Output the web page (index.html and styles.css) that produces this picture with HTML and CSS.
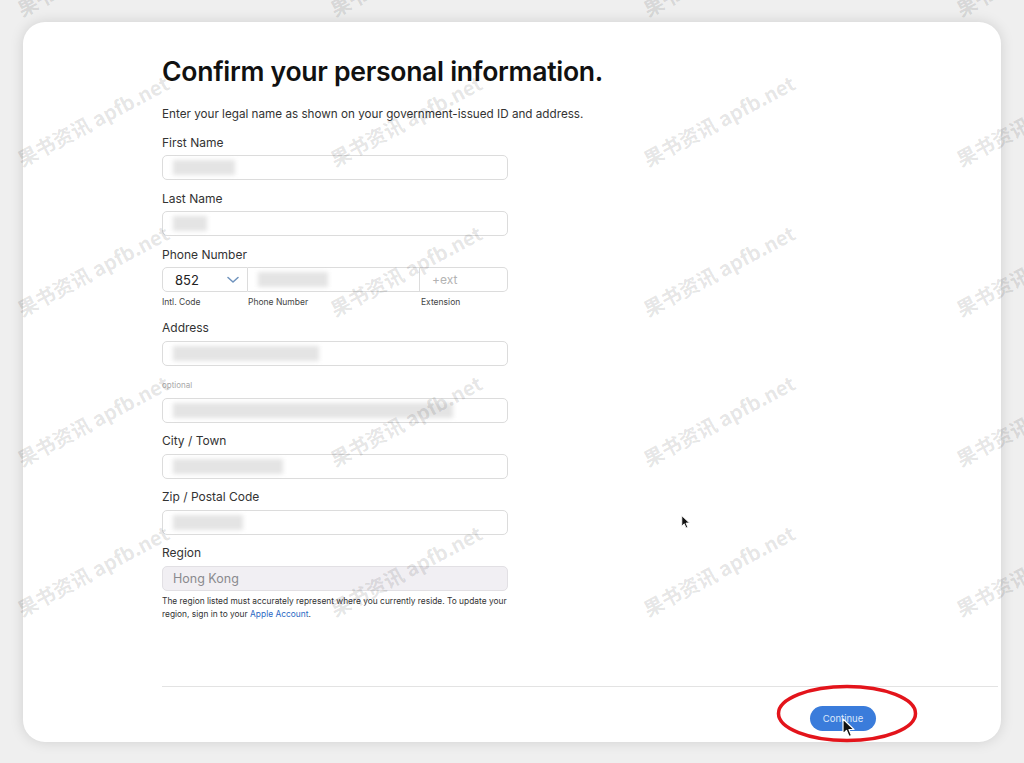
FILE: index.html
```html
<!DOCTYPE html>
<html lang="en">
<head>
<meta charset="utf-8">
<title>Confirm your personal information</title>
<link rel="stylesheet" href="styles.css">
</head>
<body>
<div class="page">
  <main class="card">
    <section class="content">
      <h1 class="title">Confirm your personal information.</h1>
      <p class="intro">Enter your legal name as shown on your government-issued ID and address.</p>

      <div class="field">
        <label class="label">First Name</label>
        <div class="input"><span class="redact r-first"></span></div>
      </div>

      <div class="field">
        <label class="label">Last Name</label>
        <div class="input"><span class="redact r-last"></span></div>
      </div>

      <div class="field">
        <label class="label">Phone Number</label>
        <div class="phone-row">
          <div class="input code"><span class="code-val">852</span>
            <svg class="chev" width="12" height="8" viewBox="0 0 12 8"><path d="M1 1.5 L6 6 L11 1.5" fill="none" stroke="#6f93bd" stroke-width="1.5" stroke-linecap="round" stroke-linejoin="round"/></svg>
          </div>
          <div class="input num"><span class="redact r-phone"></span></div>
          <div class="input ext"><span class="ph">+ext</span></div>
        </div>
        <div class="phone-sub">
          <span>Intl. Code</span><span>Phone Number</span><span>Extension</span>
        </div>
      </div>

      <div class="field">
        <label class="label">Address</label>
        <div class="input"><span class="redact r-addr"></span></div>
        <span class="optional">optional</span>
        <div class="input"><span class="redact r-addr2"></span></div>
      </div>

      <div class="field">
        <label class="label">City / Town</label>
        <div class="input"><span class="redact r-city"></span></div>
      </div>

      <div class="field">
        <label class="label">Zip / Postal Code</label>
        <div class="input"><span class="redact r-zip"></span></div>
      </div>

      <div class="field">
        <label class="label">Region</label>
        <div class="input disabled"><span class="region-val">Hong Kong</span></div>
        <p class="note">The region listed must accurately represent where you currently reside. To update your region, sign in to your <a class="link">Apple Account</a>.</p>
      </div>
    </section>

    <footer class="footer">
      <div class="actions">
        <button class="continue">Continue</button>
        <svg class="ring" width="144" height="61" viewBox="0 0 144 61"><ellipse cx="72" cy="30.5" rx="68.5" ry="27" fill="none" stroke="#e3141b" stroke-width="3.5"/></svg>
        <svg class="cursor cursor-btn" width="14" height="20" viewBox="0 0 14 20"><path d="M1 1 L1 16 L4.5 12.5 L7 18.5 L9.5 17.5 L7 11.5 L12 11.5 Z" fill="#111" stroke="#fff" stroke-width="1.2" stroke-linejoin="round"/></svg>
      </div>
    </footer>
    <svg class="cursor cursor-mid" width="10" height="14" viewBox="0 0 14 20"><path d="M1 1 L1 16 L4.5 12.5 L7 18.5 L9.5 17.5 L7 11.5 L12 11.5 Z" fill="#111" stroke="#fff" stroke-width="1.2" stroke-linejoin="round"/></svg>
  </main>
</div>

<div class="watermarks" aria-hidden="true">
  <div class="wm-grid">
    <span class="wm">果书资讯 apfb.net</span><span class="wm">果书资讯 apfb.net</span><span class="wm">果书资讯 apfb.net</span><span class="wm">果书资讯 apfb.net</span>
    <span class="wm">果书资讯 apfb.net</span><span class="wm">果书资讯 apfb.net</span><span class="wm">果书资讯 apfb.net</span><span class="wm">果书资讯 apfb.net</span>
    <span class="wm">果书资讯 apfb.net</span><span class="wm">果书资讯 apfb.net</span><span class="wm">果书资讯 apfb.net</span><span class="wm">果书资讯 apfb.net</span>
    <span class="wm">果书资讯 apfb.net</span><span class="wm">果书资讯 apfb.net</span><span class="wm">果书资讯 apfb.net</span><span class="wm">果书资讯 apfb.net</span>
    <span class="wm">果书资讯 apfb.net</span><span class="wm">果书资讯 apfb.net</span><span class="wm">果书资讯 apfb.net</span><span class="wm">果书资讯 apfb.net</span>
  </div>
</div>
</body>
</html>
```

FILE: styles.css
```css
* { box-sizing: border-box; }

html, body {
  margin: 0;
  padding: 0;
  width: 1024px;
  height: 763px;
  overflow: hidden;
}

body {
  background: #efefef;
  font-family: Inter, "Noto Sans CJK SC", sans-serif;
  color: #1d1d1f;
  position: relative;
}

.page {
  padding: 22px 23px 0 23px;
}

.card {
  position: relative;
  width: 978px;
  height: 720px;
  background: #fff;
  border-radius: 22px;
  box-shadow: 0 0 14px rgba(0, 0, 0, 0.13);
  display: flex;
  flex-direction: column;
}

.content {
  padding: 31px 0 0 139px;
  width: 485px;
}

.title {
  margin: 0;
  font-size: 26.6px;
  line-height: 36px;
  font-weight: 600;
  letter-spacing: -0.3px;
  color: #111;
  white-space: nowrap;
}

.intro {
  margin: 17px 0 0;
  font-size: 11.7px;
  line-height: 16px;
  color: #333;
  white-space: nowrap;
}

.field {
  display: flex;
  flex-direction: column;
  width: 346px;
  margin-top: 11px;
}

.intro + .field { margin-top: 13px; }

.label {
  font-size: 12px;
  line-height: 16px;
  color: #333;
  margin-bottom: 4px;
}

.input {
  height: 25px;
  border: 1px solid #dcdcdc;
  border-radius: 5px;
  background: #fff;
  display: flex;
  align-items: center;
  padding: 0 10px;
}

.redact {
  display: block;
  height: 15px;
  background: #e4e4e4;
  filter: blur(2px);
}
.r-first { width: 62px; }
.r-last { width: 34px; }
.r-phone { width: 70px; }
.r-addr { width: 146px; }
.r-addr2 { width: 280px; }
.r-city { width: 110px; }
.r-zip { width: 70px; }

.phone-row {
  display: grid;
  grid-template-columns: 86px 172px 88px;
}
.phone-row .input { border-radius: 0; }
.phone-row .code {
  border-radius: 5px 0 0 5px;
  justify-content: space-between;
  padding: 0 8px 0 12px;
}
.phone-row .num { border-left: none; }
.phone-row .ext {
  border-left: none;
  border-radius: 0 5px 5px 0;
  padding-left: 12px;
}
.code-val {
  font-size: 13px;
  color: #222;
}
.ph {
  font-size: 12px;
  color: #b3b3b3;
}

.phone-sub {
  display: grid;
  grid-template-columns: 86px 172px 88px;
  margin-top: 4px;
  font-size: 8.5px;
  line-height: 12px;
  color: #444;
}
.phone-sub span:nth-child(3) { padding-left: 1px; }

.field:nth-child(6) { margin-top: 12px; }
.field:nth-child(6) .label { margin-bottom: 5px; }

.optional {
  margin-top: 14px;
  margin-bottom: 8px;
  font-size: 8px;
  line-height: 10px;
  color: #a8a8a8;
}

.field:nth-child(7),
.field:nth-child(8),
.field:nth-child(9) { margin-top: 10px; }
.field:nth-child(7) .label,
.field:nth-child(8) .label,
.field:nth-child(9) .label { margin-bottom: 5px; }

.disabled {
  background: #f1eff3;
  border-color: #e2e0e4;
}
.region-val {
  font-size: 12.5px;
  color: #8a8a8e;
}

.note {
  margin: 4px 0 0;
  font-size: 8.4px;
  line-height: 13px;
  color: #333;
}
.link { color: #2a68c4; }

.footer {
  margin-top: auto;
  margin-left: 139px;
  margin-right: 3px;
  border-top: 1px solid #e3e3e3;
  padding: 19px 122px 11px 0;
  display: flex;
  justify-content: flex-end;
}

.actions {
  position: relative;
  display: flex;
}

.continue {
  width: 66px;
  height: 25px;
  border: none;
  border-radius: 13px;
  background: #3a7cdb;
  color: #dbe7fa;
  font-family: Inter, sans-serif;
  font-size: 9.5px;
  padding: 0;
}

.ring {
  position: absolute;
  left: -35px;
  top: -23px;
}

.cursor { position: absolute; }
.cursor-btn { left: 32px; top: 12px; }
.cursor-mid { left: 658px; top: 493px; }

.watermarks {
  position: absolute;
  left: 0;
  top: 0;
  width: 1024px;
  height: 763px;
  overflow: hidden;
  pointer-events: none;
}

.wm-grid {
  margin: -105px 0 0 -64px;
  display: grid;
  grid-template-columns: repeat(4, 313px);
  grid-auto-rows: 150px;
}

.wm {
  display: flex;
  align-items: center;
  justify-content: center;
  transform: rotate(-28deg);
  font-family: "Noto Sans CJK SC", sans-serif;
  font-size: 20px;
  font-weight: 600;
  color: rgba(0, 0, 0, 0.11);
  white-space: nowrap;
}
```
